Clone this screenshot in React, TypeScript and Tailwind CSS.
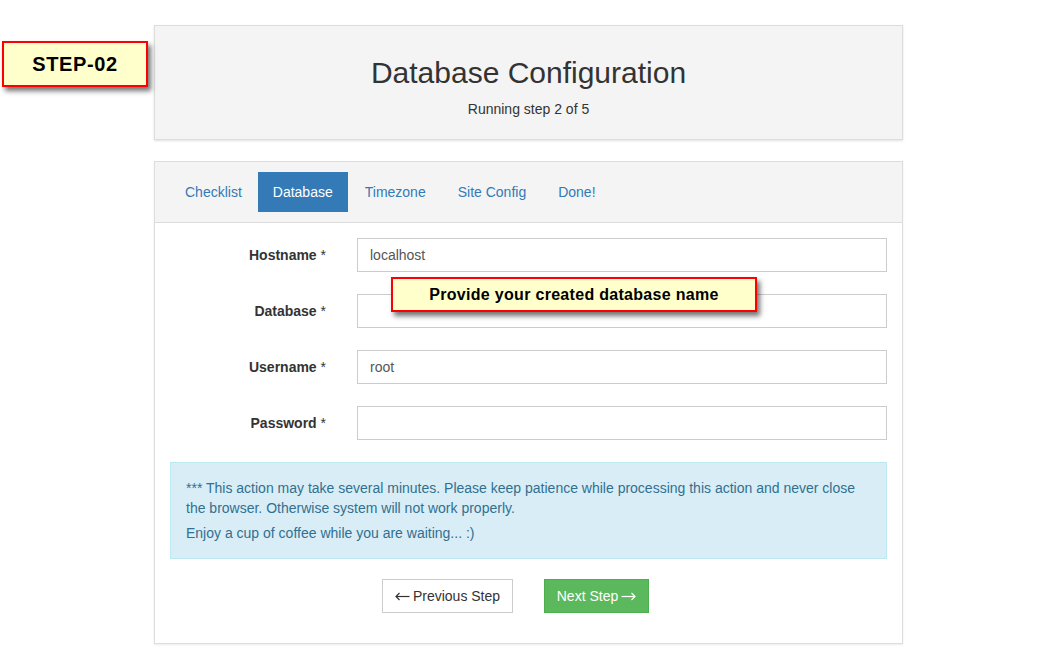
const font = { fontFamily: '"Liberation Sans", Arial, sans-serif' };

const tabs = ["Checklist", "Database", "Timezone", "Site Config", "Done!"];

const fields = [
  { label: "Hostname", value: "localhost" },
  { label: "Database", value: "" },
  { label: "Username", value: "root" },
  { label: "Password", value: "" },
];

function Arrow({ left }: { left?: boolean }) {
  return (
    <svg width="15" height="9" viewBox="0 0 15 9" className={left ? "" : "rotate-180"}>
      <path d="M1 4.5H14.5" stroke="currentColor" strokeWidth="1.2" fill="none" />
      <path d="M4.5 1L1 4.5L4.5 8" stroke="currentColor" strokeWidth="1.2" fill="none" />
    </svg>
  );
}

function Note({ text, className }: { text: string; className: string }) {
  return (
    <div
      className={`absolute flex items-center justify-center border-2 border-[#ff0000] bg-[#ffffcc] font-bold text-black shadow-[3px_4px_5px_rgba(0,0,0,0.55)] ${className}`}
    >
      {text}
    </div>
  );
}

export default function App() {
  return (
    <div className="relative min-h-[663px] bg-white text-[14px] text-[#333]" style={font}>
      <div className="ml-[154px] w-[749px] pt-[25px] pb-[19px]">
        <div className="h-[115px] border border-[#dddddd] bg-[#f4f4f4] text-center shadow-[0_1px_2px_rgba(0,0,0,0.12)]">
          <h1 className="pt-[28px] text-[30px] leading-[38px] text-[#333]">Database Configuration</h1>
          <p className="mt-[7px] leading-[20px]">Running step 2 of 5</p>
        </div>

        <div className="mt-[21px] border border-[#dddddd] bg-white shadow-[0_1px_2px_rgba(0,0,0,0.08)]">
          <div className="flex border-b border-[#dddddd] bg-[#f4f4f4] px-[15px] pt-[10px] pb-[10px]">
            {tabs.map((t, i) => (
              <a
                key={t}
                className={`px-[15px] leading-[40px] ${i === 0 ? "" : i === 1 ? "ml-[1px]" : "ml-[2px]"} ${
                  t === "Database" ? "bg-[#337ab7] text-white" : "text-[#337ab7]"
                }`}
              >
                {t}
              </a>
            ))}
          </div>

          <div className="px-[15px] pt-[15px] pb-[30px]">
            <div className="flex flex-col gap-[22px]">
              {fields.map((f) => (
                <div key={f.label} className="flex items-center">
                  <label className="w-[156px] text-right font-bold">
                    {f.label} <span className="font-normal">*</span>
                  </label>
                  <input
                    readOnly
                    value={f.value}
                    className="ml-[31px] h-[34px] flex-1 border border-[#cccccc] bg-white px-[12px] text-[14px] text-[#555] outline-none"
                    style={font}
                  />
                </div>
              ))}
            </div>

            <div className="mt-[22px] border border-[#bce8f1] bg-[#d9edf7] px-[15px] py-[15px] leading-[20px] text-[#31708f]">
              <p>
                *** This action may take several minutes. Please keep patience while processing this action and never close the browser. Otherwise system will not work properly.
              </p>
              <p className="mt-[5px]">Enjoy a cup of coffee while you are waiting... :)</p>
            </div>

            <div className="mt-[20px] flex gap-[31px] pl-[212px]">
              <button className="flex h-[34px] w-[131px] items-center justify-center gap-[3px] border border-[#cccccc] bg-white text-[#333]">
                <Arrow left />
                <span>Previous Step</span>
              </button>
              <button className="flex h-[34px] w-[105px] items-center justify-center gap-[3px] border border-[#4cae4c] bg-[#5cb85c] text-white">
                <span>Next Step</span>
                <Arrow />
              </button>
            </div>
          </div>
        </div>
      </div>

      <Note text="STEP-02" className="left-[2px] top-[41px] h-[46px] w-[146px] text-[20px] tracking-[0.6px]" />
      <Note
        text="Provide your created database name"
        className="left-[391px] top-[277px] h-[35px] w-[366px] text-[16px] tracking-[0.3px]"
      />
    </div>
  );
}
